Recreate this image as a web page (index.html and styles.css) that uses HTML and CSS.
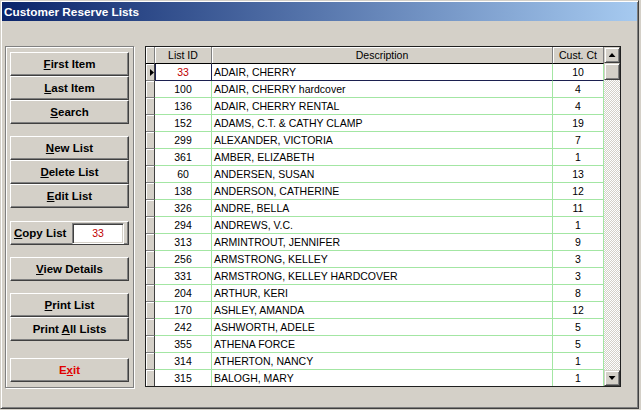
FILE: index.html
```html
<!DOCTYPE html>
<html>
<head>
<meta charset="utf-8">
<link rel="stylesheet" href="styles.css">
</head>
<body>
<div class="window">
  <div class="titlebar">Customer Reserve Lists</div>
  <div class="client">
    <div class="group">
      <div class="stack">
        <button class="btn"><span><u>F</u>irst Item</span></button>
        <button class="btn"><span><u>L</u>ast Item</span></button>
        <button class="btn"><span><u>S</u>earch</span></button>
      </div>
      <div class="stack">
        <button class="btn"><span><u>N</u>ew List</span></button>
        <button class="btn"><span><u>D</u>elete List</span></button>
        <button class="btn"><span><u>E</u>dit List</span></button>
      </div>
      <div class="copy">
        <span class="copy-label"><u>C</u>opy List</span>
        <span class="field">33</span>
      </div>
      <button class="btn"><span><u>V</u>iew Details</span></button>
      <div class="stack">
        <button class="btn"><span><u>P</u>rint List</span></button>
        <button class="btn"><span>Print <u>A</u>ll Lists</span></button>
      </div>
      <button class="btn exit"><span>E<u>x</u>it</span></button>
    </div>
    <div class="grid">
      <div class="table">
        <div class="row">
          <div class="hsel"></div>
          <div class="hcell">List ID</div>
          <div class="hcell">Description</div>
          <div class="hcell">Cust. Ct</div>
        </div>
        <div class="row current">
          <div class="sel arrow"></div>
          <div class="cell c-id focus">33</div>
          <div class="cell c-desc">ADAIR, CHERRY</div>
          <div class="cell c-ct">10</div>
        </div>
        <div class="row"><div class="sel"></div><div class="cell c-id">100</div><div class="cell c-desc">ADAIR, CHERRY hardcover</div><div class="cell c-ct">4</div></div>
        <div class="row"><div class="sel"></div><div class="cell c-id">136</div><div class="cell c-desc">ADAIR, CHERRY RENTAL</div><div class="cell c-ct">4</div></div>
        <div class="row"><div class="sel"></div><div class="cell c-id">152</div><div class="cell c-desc">ADAMS, C.T. &amp; CATHY CLAMP</div><div class="cell c-ct">19</div></div>
        <div class="row"><div class="sel"></div><div class="cell c-id">299</div><div class="cell c-desc">ALEXANDER, VICTORIA</div><div class="cell c-ct">7</div></div>
        <div class="row"><div class="sel"></div><div class="cell c-id">361</div><div class="cell c-desc">AMBER, ELIZABETH</div><div class="cell c-ct">1</div></div>
        <div class="row"><div class="sel"></div><div class="cell c-id">60</div><div class="cell c-desc">ANDERSEN, SUSAN</div><div class="cell c-ct">13</div></div>
        <div class="row"><div class="sel"></div><div class="cell c-id">138</div><div class="cell c-desc">ANDERSON, CATHERINE</div><div class="cell c-ct">12</div></div>
        <div class="row"><div class="sel"></div><div class="cell c-id">326</div><div class="cell c-desc">ANDRE, BELLA</div><div class="cell c-ct">11</div></div>
        <div class="row"><div class="sel"></div><div class="cell c-id">294</div><div class="cell c-desc">ANDREWS, V.C.</div><div class="cell c-ct">1</div></div>
        <div class="row"><div class="sel"></div><div class="cell c-id">313</div><div class="cell c-desc">ARMINTROUT, JENNIFER</div><div class="cell c-ct">9</div></div>
        <div class="row"><div class="sel"></div><div class="cell c-id">256</div><div class="cell c-desc">ARMSTRONG, KELLEY</div><div class="cell c-ct">3</div></div>
        <div class="row"><div class="sel"></div><div class="cell c-id">331</div><div class="cell c-desc">ARMSTRONG, KELLEY HARDCOVER</div><div class="cell c-ct">3</div></div>
        <div class="row"><div class="sel"></div><div class="cell c-id">204</div><div class="cell c-desc">ARTHUR, KERI</div><div class="cell c-ct">8</div></div>
        <div class="row"><div class="sel"></div><div class="cell c-id">170</div><div class="cell c-desc">ASHLEY, AMANDA</div><div class="cell c-ct">12</div></div>
        <div class="row"><div class="sel"></div><div class="cell c-id">242</div><div class="cell c-desc">ASHWORTH, ADELE</div><div class="cell c-ct">5</div></div>
        <div class="row"><div class="sel"></div><div class="cell c-id">355</div><div class="cell c-desc">ATHENA FORCE</div><div class="cell c-ct">5</div></div>
        <div class="row"><div class="sel"></div><div class="cell c-id">314</div><div class="cell c-desc">ATHERTON, NANCY</div><div class="cell c-ct">1</div></div>
        <div class="row"><div class="sel"></div><div class="cell c-id">315</div><div class="cell c-desc">BALOGH, MARY</div><div class="cell c-ct">1</div></div>
      </div>
      <div class="vscroll">
        <div class="sb-btn"><span class="arrow-up"></span></div>
        <div class="thumb"></div>
        <div class="track"></div>
        <div class="sb-btn"><span class="arrow-down"></span></div>
      </div>
    </div>
  </div>
</div>
</body>
</html>
```
FILE: styles.css
```css
* { box-sizing: border-box; }

body {
  margin: 0;
  background: #d4d0c8;
  font-family: "Liberation Sans", Arial, sans-serif;
}

.window {
  width: 639px;
  height: 409px;
  background: #d4d0c8;
  border: 1px solid;
  border-color: #d4d0c8 #404040 #404040 #d4d0c8;
  box-shadow: inset 1px 1px #fff, inset -1px -1px #808080;
  padding: 1px;
  display: flex;
  flex-direction: column;
}

.titlebar {
  height: 19px;
  flex: none;
  background: linear-gradient(to right, #0a246a, #a6caf0);
  color: #fff;
  font-weight: bold;
  font-size: 11.8px;
  line-height: 20px;
  padding-left: 2px;
}

.client {
  display: flex;
  align-items: flex-start;
  padding: 25px 0 0 3px;
}

.group {
  width: 129px;
  height: 342px;
  flex: none;
  border: 1px solid #808080;
  box-shadow: inset 1px 1px #fff, 1px 1px #fff;
  padding: 5px 4px;
  display: flex;
  flex-direction: column;
}

.group > * { margin: 0; }
.group > * + * { margin-top: 12px; }
.group > .copy { margin-top: 13px; }
.group > .exit { margin-top: 17px; }

.stack {
  display: flex;
  flex-direction: column;
}

.stack > .btn { margin: 0; }

.btn {
  width: 119px;
  height: 24px;
  flex: none;
  padding: 0 0 1px;
  background: #d4d0c8;
  border: 1px solid;
  border-color: #fff #404040 #404040 #fff;
  box-shadow: inset -1px -1px #808080;
  font-family: "Liberation Sans", Arial, sans-serif;
  font-weight: bold;
  font-size: 11.5px;
  color: #000;
  display: flex;
  align-items: center;
  justify-content: center;
}

.exit { color: #e00000; }

.copy {
  width: 119px;
  height: 24px;
  flex: none;
  background: #d4d0c8;
  border: 1px solid;
  border-color: #fff #404040 #404040 #fff;
  box-shadow: inset -1px -1px #808080;
  display: flex;
  align-items: center;
  padding-left: 3px;
}

.copy-label {
  font-weight: bold;
  font-size: 11.5px;
  color: #000;
}

.field {
  width: 52px;
  height: 21px;
  margin-left: auto;
  margin-right: 4px;
  background: #fff;
  border: 1px solid;
  border-color: #808080 #fff #fff #808080;
  box-shadow: inset 1px 1px #404040, inset -1px -1px #d4d0c8;
  color: #c00000;
  font-size: 10.5px;
  line-height: 19px;
  text-align: center;
}

.grid {
  margin-left: 11px;
  width: 476px;
  height: 341px;
  flex: none;
  border: 1px solid #202020;
  display: flex;
  overflow: hidden;
  background: #fff;
}

.table {
  width: 458px;
  flex: none;
  display: grid;
  grid-template-columns: 9px 57px 341px 51px;
  grid-auto-rows: 17px;
  align-content: start;
  font-size: 10.5px;
  color: #000;
}

.row { display: contents; }

.hsel, .hcell {
  background: #d4d0c8;
  border-right: 1px solid #808080;
  border-bottom: 1px solid #000;
  box-shadow: inset 1px 1px #fff;
  text-align: center;
  line-height: 16px;
}

.sel {
  position: relative;
  background: #d4d0c8;
  border-right: 1px solid #404040;
  border-bottom: 1px solid #808080;
  box-shadow: inset 1px 1px #fff;
}

.sel.arrow::after {
  content: "";
  position: absolute;
  left: 4px;
  top: 5px;
  width: 4px;
  height: 7px;
  background: #000;
  clip-path: polygon(0 0, 100% 50%, 0 100%);
}

.cell {
  background: #fff;
  border-right: 1px solid #a3e6a3;
  border-bottom: 1px solid #a3e6a3;
  line-height: 16px;
  white-space: nowrap;
  overflow: hidden;
}

.c-id, .c-ct { text-align: center; }
.c-desc { padding-left: 2px; }

.current > .cell { border-bottom-color: #1c2050; }

.focus {
  color: #c00000;
  border-right-color: #1c2050;
  box-shadow: inset 1px 0 #1c2050;
}

.vscroll {
  width: 16px;
  flex: none;
  display: flex;
  flex-direction: column;
}

.sb-btn, .thumb {
  flex: none;
  background: #d4d0c8;
  border: 1px solid;
  border-color: #d4d0c8 #404040 #404040 #d4d0c8;
  box-shadow: inset 1px 1px #fff, inset -1px -1px #808080;
}

.sb-btn {
  height: 16px;
  display: flex;
  align-items: center;
  justify-content: center;
}

.thumb { height: 17px; }

.track {
  flex: 1;
  background: repeating-conic-gradient(#d4d0c8 0 25%, #fff 0 50%) 0 0 / 2px 2px;
}

.arrow-up, .arrow-down {
  width: 7px;
  height: 4px;
  background: #000;
}

.arrow-up { clip-path: polygon(50% 0, 100% 100%, 0 100%); }
.arrow-down { clip-path: polygon(0 0, 100% 0, 50% 100%); }
```
